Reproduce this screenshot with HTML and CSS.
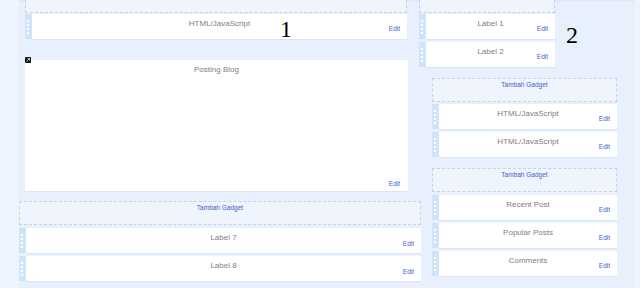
FILE: index.html
```html
<!DOCTYPE html>
<html lang="id">
<head>
    <meta charset="UTF-8">
    <title>Tata Letak</title>
    <link rel="stylesheet" href="styles.css">
</head>
<body>
<div class="layout">
    <!-- kolom utama -->
    <div class="main-col">
        <div class="section-top">
            <div class="add-box add-box-cut"></div>
            <div class="widget">
                <div class="grip"></div>
                <div class="widget-body">
                    <div class="widget-title">HTML/JavaScript</div>
                    <div class="edit">Edit</div>
                </div>
            </div>
            <div class="post-box">
                <span class="post-icon">
                    <svg width="6" height="6" viewBox="0 0 6 6">
                        <rect x="0" y="0" width="6" height="6" rx="1" fill="#111"/>
                        <path d="M1.5 4.5 L4.5 1.5 M2.5 1.5 H4.5 V3.5" stroke="#ddd" stroke-width="0.8" fill="none"/>
                    </svg>
                </span>
                <div class="widget-title">Posting Blog</div>
                <div class="edit">Edit</div>
            </div>
        </div>

        <div class="section-bottom">
            <div class="add-box"><span class="add-link">Tambah Gadget</span></div>
            <div class="widget">
                <div class="grip"></div>
                <div class="widget-body">
                    <div class="widget-title">Label 7</div>
                    <div class="edit edit-low">Edit</div>
                </div>
            </div>
            <div class="widget">
                <div class="grip"></div>
                <div class="widget-body">
                    <div class="widget-title">Label 8</div>
                    <div class="edit edit-low">Edit</div>
                </div>
            </div>
        </div>

        <span class="marker marker-1">1</span>
    </div>

    <!-- sidebar -->
    <div class="side-col">
        <div class="labels">
            <div class="add-box add-box-cut"></div>
            <div class="widget">
                <div class="grip"></div>
                <div class="widget-body">
                    <div class="widget-title">Label 1</div>
                    <div class="edit">Edit</div>
                </div>
            </div>
            <div class="widget">
                <div class="grip"></div>
                <div class="widget-body">
                    <div class="widget-title">Label 2</div>
                    <div class="edit">Edit</div>
                </div>
            </div>
        </div>

        <div class="side-lower">
            <div class="add-box"><span class="add-link">Tambah Gadget</span></div>
            <div class="widget widget-first">
                <div class="grip"></div>
                <div class="widget-body">
                    <div class="widget-title">HTML/JavaScript</div>
                    <div class="edit">Edit</div>
                </div>
            </div>
            <div class="widget">
                <div class="grip"></div>
                <div class="widget-body">
                    <div class="widget-title">HTML/JavaScript</div>
                    <div class="edit">Edit</div>
                </div>
            </div>

            <div class="add-box add-box-gap"><span class="add-link">Tambah Gadget</span></div>
            <div class="widget">
                <div class="grip"></div>
                <div class="widget-body">
                    <div class="widget-title">Recent Post</div>
                    <div class="edit">Edit</div>
                </div>
            </div>
            <div class="widget">
                <div class="grip"></div>
                <div class="widget-body">
                    <div class="widget-title">Popular Posts</div>
                    <div class="edit">Edit</div>
                </div>
            </div>
            <div class="widget">
                <div class="grip"></div>
                <div class="widget-body">
                    <div class="widget-title">Comments</div>
                    <div class="edit">Edit</div>
                </div>
            </div>
        </div>

        <span class="marker marker-2">2</span>
    </div>
</div>
</body>
</html>
```

FILE: styles.css
```css
/* halaman */
body {
    margin: 0;
    height: 288px;
    overflow: hidden;
    background-color: #eef4fe;
    font-family: "Liberation Sans", Arial, sans-serif;
}

.layout {
    display: flex;
    margin-left: 19px;
    width: 616px;
    height: 288px;
    background-color: #e8f0fd;
    box-shadow: inset 0 2px 2px -1px #dde5f2;
}

/* kolom */
.main-col {
    position: relative;
    width: 400px;
}

.section-top {
    margin-left: 6px;
    width: 382px;
}

.section-bottom {
    margin-top: 10px;
    width: 402px;
}

.side-col {
    position: relative;
    width: 216px;
}

.labels {
    width: 136px;
}

.side-lower {
    margin-top: 11px;
    margin-left: 13px;
    width: 185px;
}

/* kotak tambah gadget */
.add-box {
    box-sizing: border-box;
    height: 24px;
    border: 1px dashed #c6d2e6;
    background-color: #eff4fd;
    text-align: center;
    padding-top: 2px;
    font-size: 6.5px;
    line-height: 8px;
}

.add-box-cut {
    height: 13px;
    border-top: none;
}

.add-box-gap {
    margin-top: 11px;
}

.add-link {
    color: #3f5fcf;
}

/* widget */
.widget {
    display: flex;
    height: 25px;
    margin-top: 3px;
}

.add-box-cut + .widget {
    margin-top: 1px;
}

.widget-first {
    margin-top: 2px;
}

.grip {
    position: relative;
    width: 7px;
    background-color: #cfe4f9;
}

.grip::before {
    content: "";
    position: absolute;
    left: 2px;
    top: 6px;
    bottom: 4px;
    width: 2px;
    background: repeating-linear-gradient(#ffffff 0 2px, transparent 2px 4px);
}

.widget-body {
    flex: 1;
    background-color: #ffffff;
    box-shadow: 0 1px 0 #d9e5f6;
}

.widget-title {
    padding-top: 5px;
    font-size: 8px;
    line-height: 9px;
    color: #808080;
    text-align: center;
}

.edit {
    margin-top: -3px;
    padding-right: 7px;
    font-size: 6.5px;
    line-height: 8px;
    color: #3f5fcf;
    text-align: right;
}

.edit-low {
    margin-top: -2px;
}

/* posting blog */
.post-box {
    position: relative;
    box-sizing: border-box;
    display: flex;
    flex-direction: column;
    justify-content: space-between;
    margin-top: 21px;
    width: 383px;
    height: 131px;
    padding-bottom: 3px;
    background-color: #ffffff;
    box-shadow: 0 1px 0 #d9e5f6;
}

.post-box .edit {
    margin-top: 0;
    padding-right: 8px;
}

.post-icon {
    position: absolute;
    left: 0;
    top: -3px;
    width: 6px;
    height: 6px;
    line-height: 0;
}

/* nomor penanda */
.marker {
    position: absolute;
    font-family: "Liberation Serif", "Times New Roman", serif;
    font-size: 24px;
    line-height: 24px;
    color: #000000;
}

.marker-1 {
    left: 261px;
    top: 17px;
}

.marker-2 {
    left: 147px;
    top: 23px;
}
```
